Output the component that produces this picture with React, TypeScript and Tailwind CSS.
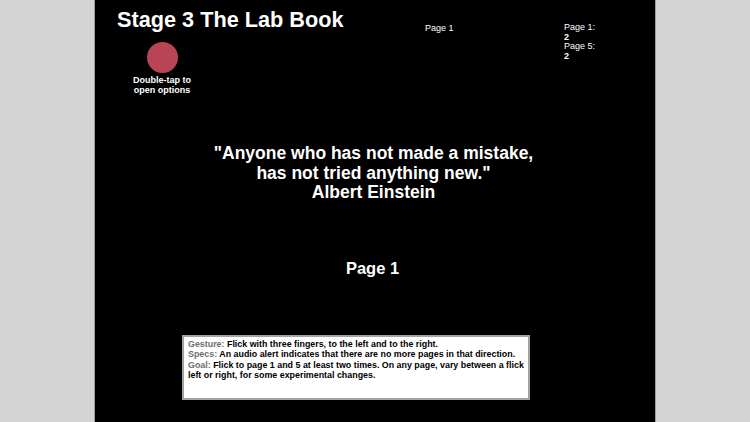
export default function App() {
  return (
    <div className="flex w-[750px] h-[422px] bg-[#d4d4d4] font-['Liberation_Sans',Arial,sans-serif] overflow-hidden">
      <div className="ml-[94px] w-[562px] h-full bg-black text-white flex flex-col border-x border-[#9c9c9c]">
        {/* header */}
        <div className="flex h-[96px] pt-[9px]">
          <div className="w-[330px] pl-[22px] flex flex-col">
            <h1 className="text-[21.7px] leading-[22px] font-bold whitespace-nowrap">Stage 3 The Lab Book</h1>
            <div className="ml-[10px] w-[70px] flex flex-col items-center">
              <div className="mt-[11px] w-[31px] h-[31px] rounded-full bg-[#b94455]" />
              <p className="mt-[2px] text-[9px] leading-[10px] font-bold text-center">
                Double-tap to<br />open options
              </p>
            </div>
          </div>
          <div className="w-[139px] mt-[14px] text-[9px] leading-[10px]">Page 1</div>
          <div className="mt-[14px] text-[9px] leading-[9.7px]">
            <div>Page 1:</div>
            <div className="font-bold">2</div>
            <div>Page 5:</div>
            <div className="font-bold">2</div>
          </div>
        </div>

        {/* quote */}
        <div className="mt-[48px] pr-[3px] text-center text-[17.5px] leading-[19.5px] font-bold">
          <p>"Anyone who has not made a mistake,</p>
          <p>has not tried anything new."</p>
          <p>Albert Einstein</p>
        </div>

        <div className="mt-[55px] pr-[5px] text-center text-[16.5px] leading-[20px] font-bold">Page 1</div>

        {/* instructions */}
        <div className="mt-[57px] ml-[87px] w-[348px] h-[65px] bg-white border-2 border-[#a3a3a3] pl-[4px] pr-[1px] pt-[2px] text-[8.9px] leading-[10.5px] font-bold text-black">
          <p>
            <span className="text-[#6e6e6e]">Gesture:</span> Flick with three fingers, to the left and to the right.
          </p>
          <p>
            <span className="text-[#6e6e6e]">Specs:</span> An audio alert indicates that there are no more pages in that direction.
          </p>
          <p>
            <span className="text-[#6e6e6e]">Goal:</span> Flick to page 1 and 5 at least two times. On any page, vary between a flick left or right, for some experimental changes.
          </p>
        </div>
      </div>
    </div>
  );
}
